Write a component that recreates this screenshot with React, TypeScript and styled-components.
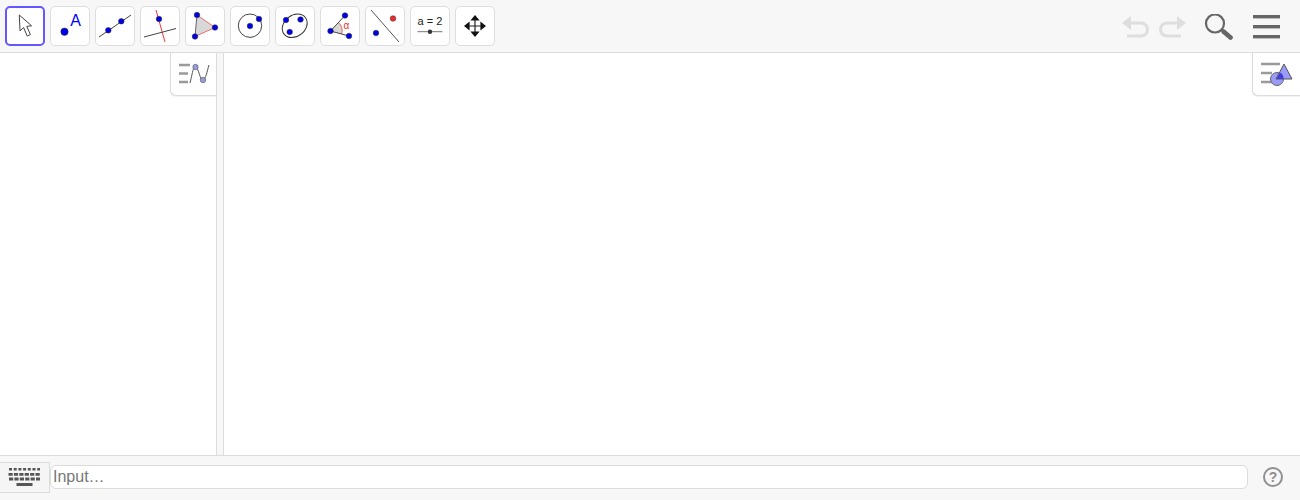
import React from "react";
import styled, { createGlobalStyle } from "styled-components";

const Global = createGlobalStyle`
  html, body { margin: 0; padding: 0; background: #fff; }
  body { font-family: "Liberation Sans", Arial, sans-serif; overflow: hidden; }
`;
const Page = styled.div`
  width: 1300px; height: 500px; display: flex; flex-direction: column;
`;
const Toolbar = styled.header`
  height: 52px; flex: none; background: #f7f7f7;
  border-bottom: 1px solid #dcdcdc; display: flex; align-items: flex-start;
  justify-content: space-between; padding: 0 0 0 5px;
`;
const Tools = styled.div`
  display: flex; gap: 5px; padding-top: 6px;
`;
const ToolButton = styled.button<{ $active?: boolean }>`
  width: 40px; height: 40px; padding: 0; background: #fff; box-sizing: border-box;
  border: ${p => (p.$active ? "2px solid #6557ff" : "1px solid #dedede")};
  border-radius: 5px; position: relative; display: block;
`;
const ToolIcon = styled.svg<{ $inset: number }>`
  position: absolute; left: ${p => -p.$inset}px; top: ${p => -p.$inset}px;
  width: 40px; height: 40px; display: block;
`;
const Actions = styled.div`
  display: flex; align-items: flex-start; padding: 14px 20px 0 0;
`;
const ActionIcon = styled.svg<{ $w: number; $gap: number }>`
  width: ${p => p.$w}px; height: 26px; display: block; flex: none; margin-left: ${p => p.$gap}px;
`;
const Main = styled.main`
  flex: 1; display: flex; min-height: 0;
`;
const AlgebraPanel = styled.section`
  width: 216px; flex: none; background: #fff; position: relative;
`;
const Splitter = styled.div`
  width: 6px; flex: none; background: #f7f7f7;
  border-left: 1px solid #dcdcdc; border-right: 1px solid #dcdcdc;
`;
const GraphicsPanel = styled.section`
  flex: 1; background: #fff; position: relative;
`;
const StyleTab = styled.button<{ $w: number }>`
  position: absolute; top: 0; right: 0; width: ${p => p.$w}px; height: 43px; padding: 0;
  background: #fff; box-sizing: border-box; border: 1px solid #dcdcdc;
  border-top: none; border-right: none; border-bottom-left-radius: 6px;
  box-shadow: 0 1px 1px rgba(0,0,0,0.06); display: block;
`;
const TabIcon = styled.svg`
  width: 45px; height: 42px; display: block;
`;
const InputBar = styled.footer`
  height: 45px; flex: none; background: #f7f7f7; border-top: 1px solid #dcdcdc;
  display: flex; align-items: center; padding-bottom: 2px; box-sizing: border-box;
`;
const KeyboardButton = styled.button`
  width: 50px; height: 31px; padding: 0; flex: none; background: #f5f5f5;
  border: 1px solid #dcdcdc; border-left: none; box-sizing: border-box;
  display: flex; align-items: center; justify-content: center;
`;
const InputField = styled.div`
  width: 1198px; height: 24px; background: #fff; border: 1px solid #dcdcdc; box-sizing: border-box;
  border-radius: 6px; display: flex; align-items: center; padding-left: 2px;
  font-size: 16px; color: #777; flex: none;
`;
const HelpBadge = styled.div`
  width: 20px; height: 20px; box-sizing: border-box; border: 2px solid #8f8f8f; border-radius: 50%;
  margin-left: 15px; color: #8f8f8f; font-weight: 700; font-size: 14px;
  display: flex; align-items: center; justify-content: center; flex: none;
`;

const BLUE = "#0000e6";
const Pt = ({ x, y, r = 2.8, c = BLUE }: { x: number; y: number; r?: number; c?: string }) => (
  <circle cx={x} cy={y} r={r} fill={c} stroke="#333" strokeWidth={0.5} />
);

const tools: React.ReactNode[] = [
  <path d="M14.3 9 L15 24.8 L18.6 21.6 L22.2 30 L25.4 28.6 L21.8 20.4 L26.6 19.8 Z" fill="#fff" stroke="#444" strokeWidth={1} />,
  <>
    <Pt x={14.5} y={25.7} r={3.7} />
    <text x={25.7} y={20} textAnchor="middle" fontSize={16} fill="#0000ff" fontFamily="Liberation Sans, sans-serif">A</text>
  </>,
  <>
    <line x1={4} y1={31} x2={36} y2={9} stroke="#444" strokeWidth={1} />
    <Pt x={13.3} y={24.3} />
    <Pt x={26.3} y={15.3} />
  </>,
  <>
    <line x1={16} y1={4} x2={25} y2={36} stroke="#ee3a3a" strokeWidth={1} />
    <line x1={4} y1={31} x2={36} y2={22.5} stroke="#444" strokeWidth={1} />
    <Pt x={19} y={13} />
  </>,
  <>
    <polygon points="12,9 30,21.5 10,30.5" fill="#d8d8d8" stroke="none" />
    <line x1={12} y1={9} x2={30} y2={21.5} stroke="#e8706a" strokeWidth={1} />
    <line x1={30} y1={21.5} x2={10} y2={30.5} stroke="#e8706a" strokeWidth={1} />
    <line x1={10} y1={30.5} x2={12} y2={9} stroke="#666" strokeWidth={1} />
    <Pt x={12} y={9} />
    <Pt x={30} y={21.5} />
    <Pt x={10} y={30.5} />
  </>,
  <>
    <circle cx={20} cy={19.7} r={11.7} fill="none" stroke="#444" strokeWidth={1} />
    <Pt x={20} y={20} />
    <Pt x={29} y={13} />
  </>,
  <>
    <ellipse cx={19.7} cy={19.8} rx={13.5} ry={10.5} fill="none" stroke="#333" strokeWidth={1} transform="rotate(-38 19.7 19.8)" />
    <Pt x={11} y={14} />
    <Pt x={25.5} y={13.5} />
    <Pt x={14.7} y={26} />
  </>,
  <>
    <path d="M10.5 25 L18.5 16.5 A11.5 11.5 0 0 1 21.6 28 Z" fill="#d8d8d8" />
    <path d="M18.5 16.5 A11.5 11.5 0 0 1 21.6 28" fill="none" stroke="#ee6060" strokeWidth={1} />
    <line x1={10.5} y1={25} x2={25} y2={9.5} stroke="#444" strokeWidth={1} />
    <line x1={10.5} y1={25} x2={29} y2={30} stroke="#444" strokeWidth={1} />
    <Pt x={10.5} y={25} />
    <Pt x={25} y={9.5} />
    <Pt x={29} y={30} />
    <text x={26.5} y={23} textAnchor="middle" fontSize={10} fill="#e83030" fontFamily="Liberation Sans, sans-serif">α</text>
  </>,
  <>
    <line x1={6} y1={4} x2={34} y2={36} stroke="#555" strokeWidth={1} />
    <Pt x={11} y={27} />
    <Pt x={28} y={12.5} c="#ee2a2a" />
  </>,
  <>
    <text x={20} y={19} textAnchor="middle" fontSize={11} fill="#222" fontFamily="Liberation Sans, sans-serif">a = 2</text>
    <line x1={7.5} y1={25.7} x2={32.5} y2={25.7} stroke="#777" strokeWidth={1} />
    <circle cx={20} cy={25.7} r={2.2} fill="#333" />
  </>,
  <>
    <path d="M20 11 V29 M12 20 H28" stroke="#222" strokeWidth={1.2} />
    <path d="M20 9 L15.4 14.6 H24.6 Z M20 31 L15.4 25.4 H24.6 Z M9 20 L14.6 15.4 V24.6 Z M31 20 L25.4 15.4 V24.6 Z" fill="#111" />
  </>,
];

export default function App() {
  return (
    <Page>
      <Global />
      <Toolbar>
        <Tools>
          {tools.map((t, i) => (
            <ToolButton key={i} $active={i === 0}>
              <ToolIcon $inset={i === 0 ? 2 : 1} viewBox="0 0 40 40">{t}</ToolIcon>
            </ToolButton>
          ))}
        </Tools>
        <Actions>
          <ActionIcon $w={28} $gap={0} viewBox="0 0 28 26">
            <path d="M8 9 H19 A6.5 6.5 0 0 1 19 22 H5" fill="none" stroke="#dedede" strokeWidth={3} />
            <path d="M0 9 L9 2 V16 Z" fill="#dedede" />
          </ActionIcon>
          <ActionIcon $w={28} $gap={8} viewBox="0 0 28 26">
            <path d="M20 9 H9 A6.5 6.5 0 0 0 9 22 H23" fill="none" stroke="#dedede" strokeWidth={3} />
            <path d="M28 9 L19 2 V16 Z" fill="#dedede" />
          </ActionIcon>
          <ActionIcon $w={30} $gap={18} viewBox="0 0 30 26">
            <circle cx={11} cy={9.5} r={9} fill="none" stroke="#666" strokeWidth={2.2} />
            <line x1={19.5} y1={17.5} x2={26.5} y2={23.5} stroke="#666" strokeWidth={4.6} strokeLinecap="round" />
          </ActionIcon>
          <ActionIcon $w={27} $gap={19} viewBox="0 0 27 26">
            <rect x={0} y={1} width={27} height={3.4} fill="#666" />
            <rect x={0} y={11} width={27} height={3.4} fill="#666" />
            <rect x={0} y={21} width={27} height={3.4} fill="#666" />
          </ActionIcon>
        </Actions>
      </Toolbar>
      <Main>
        <AlgebraPanel>
          <StyleTab $w={46} aria-label="algebra style">
            <TabIcon viewBox="0 0 45 42">
              <path d="M8 12 H19 M8 20.5 H17 M8 29 H17" stroke="#9a9a9a" strokeWidth={2.4} />
              <path d="M19 30 C21 23 22 13 24.5 14 C28 15 29 28 32 27 C35 26 36 18 38 12" fill="none" stroke="#555" strokeWidth={1} />
              <circle cx={24.5} cy={14} r={2.7} fill="#9a9ae0" stroke="#555" strokeWidth={0.6} />
              <circle cx={32} cy={27} r={2.7} fill="#9a9ae0" stroke="#555" strokeWidth={0.6} />
            </TabIcon>
          </StyleTab>
        </AlgebraPanel>
        <Splitter />
        <GraphicsPanel>
          <StyleTab $w={48} aria-label="graphics style">
            <TabIcon viewBox="0 0 45 42">
              <path d="M8 11 H27 M8 20 H19 M8 29 H19" stroke="#9a9a9a" strokeWidth={2.4} />
              <circle cx={24} cy={26} r={6.5} fill="#9a9af8" stroke="#666" strokeWidth={1} />
              <polygon points="31,11 39,26 23,26" fill="#9a9af8" stroke="#555" strokeWidth={1} />
              <path d="M27 19.6 A6.5 6.5 0 0 1 30.5 26 H23.5 Z" fill="#4040d8" />
            </TabIcon>
          </StyleTab>
        </GraphicsPanel>
      </Main>
      <InputBar>
        <KeyboardButton aria-label="keyboard">
          <svg width="33" height="18" viewBox="0 0 33 18">
            <path d="M1 1.2 H32" stroke="#555" strokeWidth={2.4} strokeDasharray="3 1.7" fill="none" />
            <path d="M0.5 6.3 H32.5 M1 11 H32" stroke="#555" strokeWidth={2.8} strokeDasharray="4.2 1.2" fill="none" />
            <rect x={8.5} y={15} width={16} height={3} fill="#555" />
          </svg>
        </KeyboardButton>
        <InputField>Input…</InputField>
        <HelpBadge>?</HelpBadge>
      </InputBar>
    </Page>
  );
}
